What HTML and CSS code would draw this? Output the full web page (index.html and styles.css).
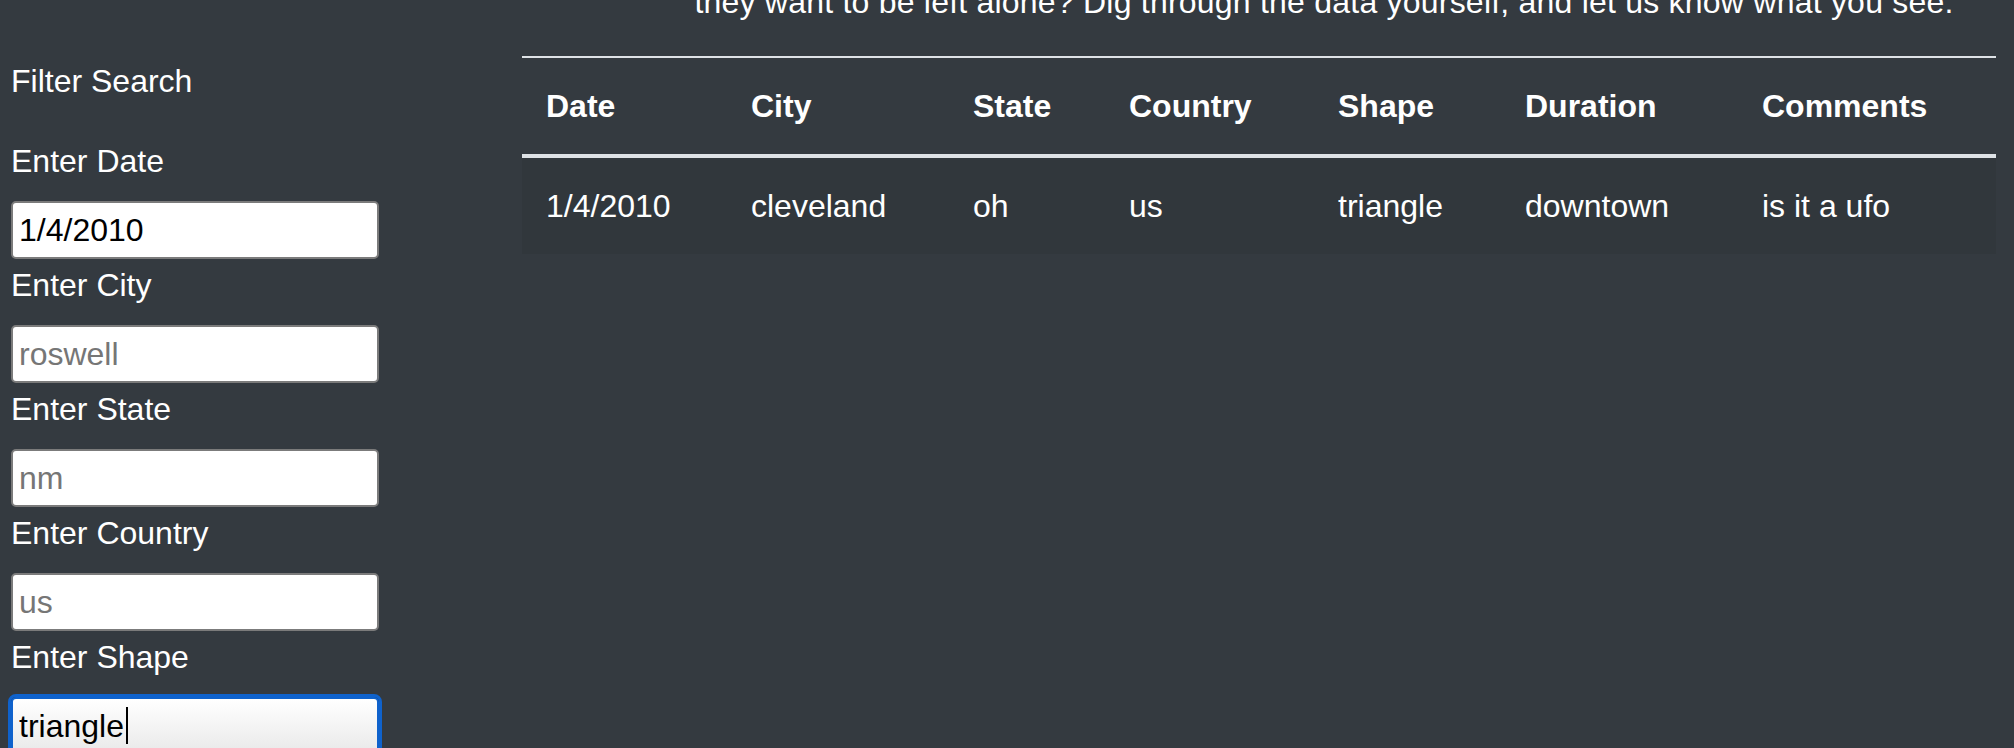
FILE: index.html
```html
<!DOCTYPE html>
<html lang="en">
<head>
<meta charset="utf-8">
<title>UFO Sightings</title>
<link rel="stylesheet" href="styles.css">
</head>
<body>
<div class="layout">
  <aside class="sidebar">
    <div class="filter-title">Filter Search</div>
    <form class="filters">
      <label class="filter-label" for="datetime">Enter Date</label>
      <input class="filter-input" id="datetime" type="text" value="1/4/2010" placeholder="1/1/2010">
      <label class="filter-label" for="city">Enter City</label>
      <input class="filter-input" id="city" type="text" placeholder="roswell">
      <label class="filter-label" for="state">Enter State</label>
      <input class="filter-input" id="state" type="text" placeholder="nm">
      <label class="filter-label" for="country">Enter Country</label>
      <input class="filter-input" id="country" type="text" placeholder="us">
      <label class="filter-label" for="shape">Enter Shape</label>
      <div class="focus-wrap">
        <input class="filter-input is-focused" id="shape" type="text" value="triangle" placeholder="circle">
        <span class="caret"></span>
      </div>
    </form>
  </aside>
  <main class="content">
    <p class="intro">they want to be left alone? Dig through the data yourself, and let us know what you see.</p>
    <table class="ufo-table">
      <colgroup>
        <col class="c-date"><col class="c-city"><col class="c-state"><col class="c-country"><col class="c-shape"><col class="c-duration"><col class="c-comments">
      </colgroup>
      <thead>
        <tr><th>Date</th><th>City</th><th>State</th><th>Country</th><th>Shape</th><th>Duration</th><th>Comments</th></tr>
      </thead>
      <tbody>
        <tr><td>1/4/2010</td><td>cleveland</td><td>oh</td><td>us</td><td>triangle</td><td>downtown</td><td>is it a ufo</td></tr>
      </tbody>
    </table>
  </main>
</div>
</body>
</html>
```

FILE: styles.css
```css
html {
  overflow: hidden;
}
body {
  margin: 0;
  background: #343a40;
  color: #ffffff;
  font-family: "Liberation Sans", Arial, sans-serif;
  font-size: 32px;
  line-height: 48px;
}
.layout {
  display: flex;
  align-items: flex-start;
}
.sidebar {
  flex: 0 0 511px;
  padding-left: 11px;
}
.filter-title {
  margin-top: 57px;
  margin-bottom: 32px;
}
.filters {
  display: flex;
  flex-direction: column;
  align-items: flex-start;
}
.filter-label {
  display: block;
  margin-bottom: 16px;
}
.filter-input {
  box-sizing: border-box;
  width: 368px;
  height: 58px;
  margin: 0 0 2px 0;
  padding: 0 6px;
  border: 2px solid #7b7b7b;
  border-radius: 5px;
  background: #ffffff;
  color: #000000;
  font-family: "Liberation Sans", Arial, sans-serif;
  font-size: 32px;
  outline: none;
}
.filter-input::placeholder {
  color: #767676;
  opacity: 1;
}
.focus-wrap {
  position: relative;
}
.filter-input.is-focused {
  border-color: #0f62cc;
  outline: 3px solid #0f62cc;
  outline-offset: 0;
  background: linear-gradient(#ffffff, #e9e9e9);
}
.caret {
  position: absolute;
  left: 115px;
  top: 10px;
  width: 2px;
  height: 37px;
  background: #000000;
}
.content {
  flex: 0 0 1474px;
}
.intro {
  margin: -22px 0 30px 0;
  padding-left: 130px;
  text-align: center;
  letter-spacing: 0.22px;
  color: #ffffff;
}
.ufo-table {
  width: 1474px;
  table-layout: fixed;
  border-collapse: collapse;
  color: #ffffff;
}
.c-date { width: 205px; }
.c-city { width: 222px; }
.c-state { width: 156px; }
.c-country { width: 209px; }
.c-shape { width: 187px; }
.c-duration { width: 237px; }
.c-comments { width: 258px; }
.ufo-table th,
.ufo-table td {
  padding: 24px;
  text-align: left;
  vertical-align: top;
  border-top: 2px solid #dee2e6;
  white-space: nowrap;
}
.ufo-table th {
  font-weight: bold;
  vertical-align: bottom;
  border-bottom: 4px solid #dee2e6;
}
.ufo-table tbody tr:nth-child(odd) {
  background: rgba(0, 0, 0, 0.05);
}
```
